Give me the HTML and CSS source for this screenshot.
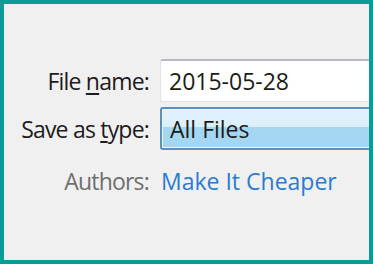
FILE: index.html
```html
<!DOCTYPE html>
<html lang="en">
<head>
  <meta charset="UTF-8" />
  <title>Save As</title>
  <link rel="stylesheet" href="styles.css">
</head>
<body>

  <div class="frame">
    <div class="form">
      <label class="field-label" for="fileName">File <u>n</u>ame:</label>
      <div class="field text-field" id="fileName">2015-05-28</div>

      <label class="field-label" for="saveType">Save as <u>t</u>ype:</label>
      <div class="field select-field" id="saveType">All Files</div>

      <span class="meta-label">Authors:</span>
      <a class="meta-link" href="#">Make It Cheaper</a>
    </div>
  </div>

</body>
</html>
```

FILE: styles.css
```css
body {
  margin: 0;
  padding: 0;
  font-family: "Open Sans", "Noto Sans", Arial, sans-serif;
}

.frame {
  width: 373px;
  height: 264px;
  box-sizing: border-box;
  border: 4px solid #0a9b96;
  background: #f0f0f0;
  overflow: hidden;
}

.form {
  display: grid;
  grid-template-columns: 145px 240px;
  column-gap: 11px;
  row-gap: 5px;
  padding-top: 55px;
  font-size: 23px;
}

.field-label {
  text-align: right;
  align-self: center;
  color: #1c1c22;
  letter-spacing: -0.8px;
}

.field-label u {
  text-underline-offset: 3px;
}

.field {
  height: 43px;
  box-sizing: border-box;
  display: flex;
  align-items: center;
  padding-left: 8px;
  color: #1c1c14;
}

.text-field {
  background: #fff;
  border: 1px solid #e2e2e6;
  border-top: 2px solid #b9b9c2;
  border-radius: 3px;
}

.select-field {
  border: 2px solid #5b8fc0;
  border-radius: 3px;
  box-shadow: inset 0 0 0 1px #eaf6fd;
  background: linear-gradient(#e0f1fc 0%, #dbeffb 45%, #a5d7f3 46%, #a3d6f3 100%);
}

.meta-label {
  text-align: right;
  color: #6e6e6e;
  margin-top: 10px;
  letter-spacing: -0.8px;
}

.meta-link {
  color: #2a7bd4;
  text-decoration: none;
  margin-top: 10px;
  padding-left: 1px;
}
```
